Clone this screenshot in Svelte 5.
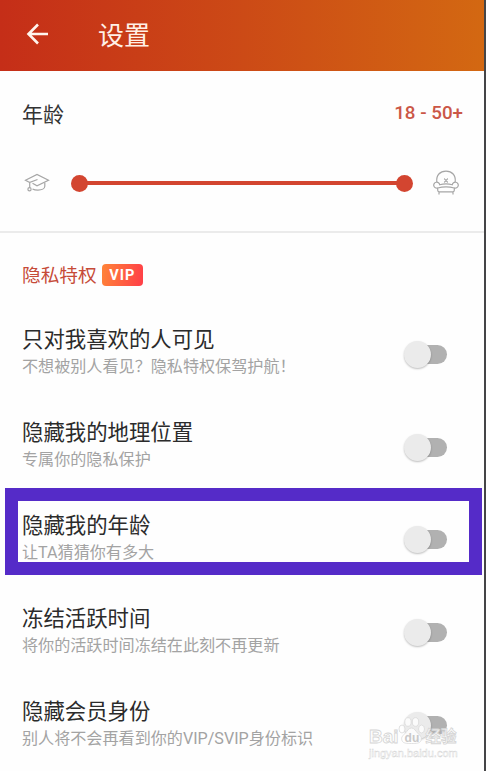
<script lang="ts">
	type Option = {
		title: string;
		desc: string;
		on: boolean;
		marked?: boolean;
	};

	let options: Option[] = $state([
		{ title: '只对我喜欢的人可见', desc: '不想被别人看见？隐私特权保驾护航！', on: false },
		{ title: '隐藏我的地理位置', desc: '专属你的隐私保护', on: false },
		{ title: '隐藏我的年龄', desc: '让TA猜猜你有多大', on: false, marked: true },
		{ title: '冻结活跃时间', desc: '将你的活跃时间冻结在此刻不再更新', on: false },
		{ title: '隐藏会员身份', desc: '别人将不会再看到你的VIP/SVIP身份标识', on: false }
	]);
</script>

<main>
	<header>
		<button class="back" aria-label="返回">
			<svg width="24" height="24" viewBox="0 0 24 24">
				<path d="M22 12H3M12 2.500 2.500 12l9.500 9.500" />
			</svg>
		</button>
		<h1>设置</h1>
	</header>

	<section class="age">
		<div class="age-head">
			<h2>年龄</h2>
			<span class="range">18 - 50+</span>
		</div>
		<div class="slider">
			<svg class="icon" width="26" height="22" viewBox="0 0 26 22">
				<path d="M8.500 11.300 13 13.800l11.500-5.600L13 2.500 1.500 8.200l4.200 2.300M13.500 7.500 5.700 10.500v5.200" />
				<path d="M20.800 10.800v3.500c0 2.200-3 3.800-6.800 3.800-2 0-4-.3-5.500-1.100" />
				<circle cx="5.500" cy="17.300" r="1.600" />
			</svg>
			<div class="track">
				<span class="thumb"></span>
				<span class="thumb"></span>
			</div>
			<svg class="icon" width="26" height="26" viewBox="0 0 26 26">
				<path d="M3.800 12C3 5 7 1.200 13 1.200S23 5 22.200 12" />
				<path d="M4.700 18a3 3 0 1 1 2-3.200c4-1.200 8.600-1.200 12.600 0a3 3 0 1 1 2 3.200" />
				<path d="M4.700 18c5-1.400 11.600-1.400 16.600 0v2.300c0 1-.5 1.500-1.500 1.500H6.200c-1 0-1.500-.5-1.500-1.500zM6 22v2.500M20 22v2.500" />
				<path d="M11.200 8.700l3.600 3.600M14.800 8.700l-3.600 3.600M11.200 8.700h.5M14.300 8.700h.5M11.200 12.300h.5M14.300 12.300h.5" />
			</svg>
		</div>
	</section>

	<section class="privacy">
		<div class="privacy-head">
			<h3>隐私特权</h3>
			<span class="vip">VIP</span>
		</div>
		<ul>
			{#each options as o (o.title)}
				<li class:marked={o.marked}>
					<div class="text">
						<h4>{o.title}</h4>
						<p>{o.desc}</p>
					</div>
					<button
						class="switch"
						class:on={o.on}
						role="switch"
						aria-checked={o.on}
						aria-label={o.title}
						onclick={() => (o.on = !o.on)}
					></button>
				</li>
			{/each}
		</ul>
	</section>

	<div class="watermark">
		<div class="brand">
			<span>Bai</span>
			<span class="paw">
				<svg width="28" height="30" viewBox="0 0 28 30">
					<ellipse cx="4" cy="14" rx="3" ry="4" />
					<ellipse cx="10" cy="7" rx="3.200" ry="4.300" />
					<ellipse cx="17.500" cy="7" rx="3.200" ry="4.300" />
					<ellipse cx="23.500" cy="14" rx="3" ry="4" />
					<path d="M13.500 13c3 0 4 3 6.500 5.500 3 3 4 4 3 7s-5 3-9.500 3C9 28.500 5 28.500 4 25.500s0-4 3-7c2.500-2.500 3.500-5.500 6.500-5.500z" />
				</svg>
				<b>du</b>
			</span>
			<span class="cn">经验</span>
		</div>
		<div class="url">jingyan.baidu.com</div>
	</div>
</main>

<style>
	:global(body) {
		margin: 0;
		background: #fefefe;
	}
	main {
		position: relative;
		box-sizing: border-box;
		width: 486px;
		height: 771px;
		overflow: hidden;
		border-right: 2px solid #454547;
		background: #fefefe;
		font-family: Roboto, 'Noto Sans CJK SC', sans-serif;
	}
	h1,
	h2,
	h3,
	h4,
	p,
	ul {
		margin: 0;
		padding: 0;
		font-weight: 400;
	}
	button {
		border: 0;
		padding: 0;
		background: none;
	}
	header {
		display: flex;
		align-items: center;
		gap: 48px;
		box-sizing: border-box;
		height: 71px;
		padding: 0 0 3px 26px;
		background: linear-gradient(90deg, #c52e18, #cc4a16 50%, #d36812);
	}
	.back {
		width: 24px;
		height: 24px;
	}
	.back svg {
		display: block;
		fill: none;
		stroke: #fff5ee;
		stroke-width: 2.6;
	}
	h1 {
		margin-top: 3px;
		color: #fff0e6;
		font-size: 26px;
		line-height: 36px;
	}
	.age {
		box-sizing: border-box;
		height: 162px;
		padding: 27px 21px 0 22px;
		border-bottom: 2px solid #ebebeb;
	}
	.age-head {
		display: flex;
		justify-content: space-between;
		align-items: center;
		height: 32px;
	}
	h2 {
		margin-top: -2px;
		color: #333;
		font-size: 21px;
	}
	.range {
		margin-top: -3px;
		color: #cb5747;
		font-size: 18.800px;
		font-weight: 500;
	}
	.slider {
		display: flex;
		align-items: center;
		justify-content: space-between;
		height: 26px;
		margin: 40px 4px 0 2px;
	}
	.icon {
		fill: none;
		stroke: #a6a6a6;
		stroke-width: 1.2;
	}
	.track {
		display: flex;
		align-items: center;
		justify-content: space-between;
		width: 342px;
		height: 17px;
		background: linear-gradient(#d34530, #d34530) center / 330px 4px no-repeat;
	}
	.thumb {
		width: 17px;
		height: 17px;
		border-radius: 50%;
		background: #d34530;
	}
	.privacy-head {
		display: flex;
		align-items: center;
		gap: 5px;
		height: 30px;
		padding: 27px 22px 17px;
	}
	h3 {
		margin-top: -4px;
		color: #c64b38;
		font-size: 18.700px;
	}
	.vip {
		width: 41px;
		height: 22px;
		border-radius: 4px;
		background: linear-gradient(100deg, #ff8438, #ff3e48);
		color: #fff;
		font-size: 14.500px;
		font-weight: 700;
		letter-spacing: 1px;
		line-height: 23px;
		text-align: center;
	}
	ul {
		list-style: none;
	}
	li {
		position: relative;
		display: flex;
		align-items: center;
		justify-content: space-between;
		height: 92.800px;
		padding: 0 36px 0 22px;
	}
	h4 {
		color: #2b2b2b;
		font-size: 21.400px;
		line-height: 28px;
	}
	p {
		margin-top: -1px;
		color: #a3a3a3;
		font-size: 16.100px;
		line-height: 27px;
	}
	.marked::after {
		content: '';
		position: absolute;
		inset: -5px 2px 10px 5px;
		border: 13px solid #552bc8;
		pointer-events: none;
	}
	.switch {
		display: flex;
		align-items: center;
		width: 39px;
		height: 19px;
		margin: 2px 1px 0 0;
		border-radius: 10px;
		background: #b1b1b1;
	}
	.switch::before {
		content: '';
		width: 27px;
		height: 27px;
		margin-left: -4px;
		border-radius: 50%;
		background: #ebebeb;
		box-shadow: 0 1px 2px rgba(0, 0, 0, 0.25);
		flex: none;
	}
	.switch.on::before {
		margin-left: 17px;
	}
	.watermark {
		position: absolute;
		left: 369px;
		top: 714px;
		width: 92px;
		color: rgba(255, 255, 255, 0.85);
		-webkit-text-stroke: 0.8px #d4d4d4;
		font-family: 'Liberation Sans', 'Noto Sans CJK SC', sans-serif;
		white-space: nowrap;
		pointer-events: none;
	}
	.brand {
		display: flex;
		align-items: flex-end;
		height: 33px;
		font-size: 19px;
		font-weight: 700;
		line-height: 20px;
	}
	.paw {
		position: relative;
		flex: none;
		width: 26px;
		height: 32px;
		margin-left: -1px;
	}
	.paw svg {
		fill: rgba(255, 255, 255, 0.8);
		stroke: #d9d9d9;
		stroke-width: 0.8;
	}
	.paw b {
		position: absolute;
		left: 7px;
		bottom: 2px;
		color: #c9c9c9;
		font-size: 12px;
		line-height: 14px;
		-webkit-text-stroke-width: 0;
	}
	.cn {
		margin-left: 2px;
		font-size: 15.500px;
	}
	.url {
		font-size: 11px;
		line-height: 12px;
		-webkit-text-stroke-width: 0.4px;
	}
</style>
